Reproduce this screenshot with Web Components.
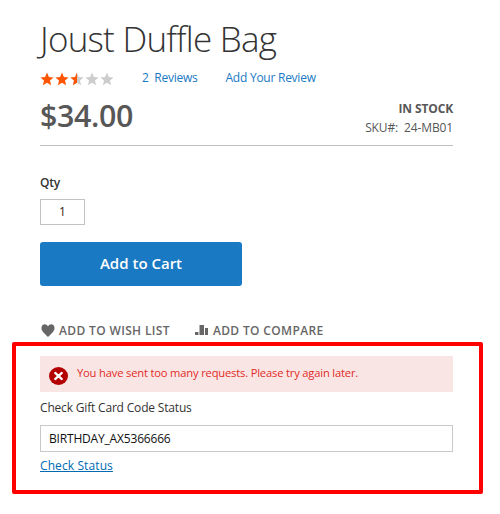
<!DOCTYPE html>
<html><head><meta charset="utf-8"><title>Joust Duffle Bag</title>
<style>
html,body{margin:0;padding:0;background:#fff}
body{font-family:"Open Sans",sans-serif;color:#333;width:500px;height:514px;overflow:hidden}
</style></head><body>
<product-page>
  <product-summary name="Joust Duffle Bag" price="$34.00" sku="24-MB01"></product-summary>
  <add-to-cart></add-to-cart>
  <product-actions></product-actions>
  <highlight-box>
    <error-message>You have sent too many requests. Please try again later.</error-message>
    <gift-card-check code="BIRTHDAY_AX5366666"></gift-card-check>
  </highlight-box>
</product-page>
<script>
function def(name, html){
  customElements.define(name, class extends HTMLElement{
    connectedCallback(){
      if(this.shadowRoot) return;
      const s=this.attachShadow({mode:'open'});
      s.innerHTML=typeof html==='function'?html(this):html;
    }
  });
}
const P="M7 0.6l1.9 4.4 4.7.4-3.6 3.1 1.1 4.7L7 10.7l-4.1 2.5L4 8.5.4 5.4l4.7-.4z";
const star=(fill)=>`<path d="${P}" fill="${fill}"/>`;
def('product-page',`<style>:host{display:flex;flex-direction:column;box-sizing:border-box;width:500px;height:514px}</style><slot></slot>`);
def('product-summary',h=>`<style>
:host{display:block;margin:0 47px 0 40px;border-bottom:1px solid #c1c1c1;height:146px;box-sizing:border-box}
h1{margin:0;padding-top:15px;font:300 35px/47px "Open Sans",sans-serif;letter-spacing:-.75px;color:#333;white-space:nowrap}
.rev{display:flex;align-items:center;height:22px;margin-top:4px;font-size:12px;letter-spacing:-.25px;color:#1979c3}
svg{display:block;width:74px;height:14px;margin:3px 28px 0 0}
.r2{margin-left:28px}
.row{display:flex;justify-content:space-between;margin-top:3px}
.price{font:600 30.4px/40px "Open Sans",sans-serif;letter-spacing:-.35px;color:#575757;margin-top:5px}
.st{text-align:right;font-size:12px;letter-spacing:-.13px;color:#575757;line-height:19px;margin-top:8px}
b{font-weight:700;display:block}
</style>
<h1>${h.getAttribute('name')}</h1>
<div class="rev"><svg viewBox="0 0 74 14">
<g>${star('#ff5501')}</g><g transform="translate(15)">${star('#ff5501')}</g>
<g transform="translate(30)">${star('#cdcdcd')}<path d="M7 0.6V10.7L2.9 13.2 4 8.5.4 5.4l4.7-.4z" fill="#ff5501"/></g>
<g transform="translate(45)">${star('#cdcdcd')}</g><g transform="translate(60)">${star('#cdcdcd')}</g></svg>
<span>2&nbsp; Reviews</span><span class="r2">Add Your Review</span></div>
<div class="row"><div class="price">${h.getAttribute('price')}</div>
<div class="st"><b>IN STOCK</b>SKU#:&nbsp; ${h.getAttribute('sku')}</div></div>`);
def('add-to-cart',`<style>
:host{display:block;margin:26px 47px 0 40px}
label{display:block;font:600 12px/22px "Open Sans",sans-serif;letter-spacing:-.2px;color:#333}
.q{box-sizing:border-box;width:45px;height:26px;border:1px solid #c2c2c2;margin-top:5px;text-align:center;font-size:12px;line-height:24px;color:#3b1a10}
button{display:block;box-sizing:border-box;width:202px;height:44px;margin-top:17px;background:#1979c3;border:0;border-radius:3px;color:#fff;font:600 15px/42px "Open Sans",sans-serif;padding:0 0 2px}
</style><label>Qty</label><div class="q">1</div><button>Add to Cart</button>`);
def('product-actions',`<style>
:host{display:flex;gap:25px;margin:34px 47px 0 41px;height:20px;align-items:center;font-size:12px;font-weight:600;color:#666;letter-spacing:.35px;white-space:nowrap}
span{display:flex;align-items:center}
svg{display:block}
.w{margin-right:4px}.c{margin-right:5px}
</style>
<span><svg class="w" width="14" height="13" viewBox="0 0 15 12" preserveAspectRatio="none"><path fill="#666" d="M7.5 12C6 10.600 4.200 9.200 2.400 7.500 1 6.200 .5 5 .5 3.800.5 1.700 2.100.2 4 .2c1.500 0 2.700.8 3.500 2C8.300 1 9.500.2 11 .2c1.900 0 3.500 1.500 3.500 3.600 0 1.200-.5 2.400-1.900 3.700C10.800 9.200 9 10.600 7.500 12z"/></svg>ADD TO WISH LIST</span>
<span><svg class="c" width="13" height="10" viewBox="0 0 13 10"><path fill="#666" d="M0 7h3.500v3H0zM4.500 0H9v10H4.500zM10 3h3v7h-3z"/></svg>ADD TO COMPARE</span>`);
def('highlight-box',`<style>
:host{display:block;box-sizing:border-box;width:471px;height:152px;margin:2px 0 0 12px;border:4px solid #fe0000;border-radius:2px;padding:10px 26px 0 24px}
</style><slot></slot>`);
def('error-message',`<style>
:host{display:flex;align-items:center;box-sizing:border-box;height:36px;background:#fae5e5;color:#e02b27;font-size:11.2px;letter-spacing:-.18px;padding:0 0 0 9px;white-space:nowrap}
svg{display:block;margin:3px 9px 0 0}
span{margin-top:-3px}
</style><svg width="19" height="18" viewBox="0 0 18 18" preserveAspectRatio="none"><circle cx="9" cy="9" r="9" fill="#b30000"/><path d="M6 6l6 6M12 6l-6 6" stroke="#fff" stroke-width="2.400" stroke-linecap="round"/></svg><span><slot></slot></span>`);
def('gift-card-check',h=>`<style>
:host{display:block;font-size:12px;letter-spacing:-.18px;color:#333}
.l{margin-top:5px;line-height:22px;font-weight:400}
.i{box-sizing:border-box;height:27px;border:1px solid #c9c9c9;margin-top:6px;padding:0 8px;line-height:25px;color:#111}
a{display:block;margin-top:3px;line-height:21px;font-weight:400;letter-spacing:.1px;color:#006bb4;text-decoration:underline}
</style><div class="l">Check Gift Card Code Status</div><div class="i">${h.getAttribute('code')}</div><a>Check Status</a>`);
</script>
</body></html>
